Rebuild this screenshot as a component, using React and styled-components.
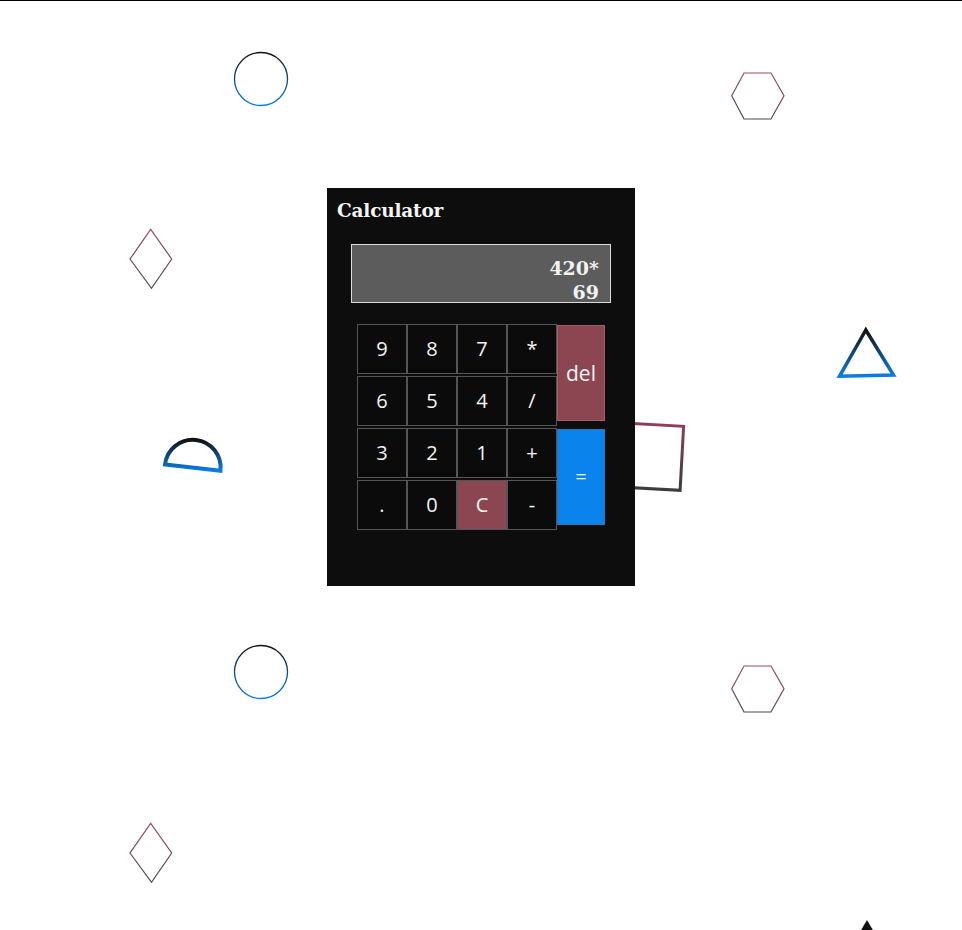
import React from 'react';
import styled, { createGlobalStyle } from 'styled-components';

const GlobalStyle = createGlobalStyle`
  html, body {
    margin: 0;
    padding: 0;
    background: #fff;
  }
`;

const Page = styled.div`
  position: relative;
  height: 929px;
  overflow: hidden;
  border-top: 1px solid #000;
  display: flex;
  justify-content: center;
  align-items: flex-start;
`;

const Shapes = styled.svg`
  position: absolute;
  left: 0;
  top: -1px;
  width: 962px;
  height: 930px;
  z-index: 0;
`;

const Card = styled.div`
  position: relative;
  z-index: 1;
  box-sizing: border-box;
  width: 308px;
  height: 398px;
  margin-top: 187px;
  padding: 10px 0 0 0;
  background: #0d0d0d;
  display: flex;
  flex-direction: column;
`;

const Title = styled.h1`
  margin: 0 0 0 10px;
  font-family: "DejaVu Serif", serif;
  font-weight: bold;
  font-size: 18.5px;
  line-height: 26px;
  letter-spacing: -0.2px;
  color: #f4f4f4;
`;

const Display = styled.div`
  box-sizing: border-box;
  width: 260px;
  height: 59px;
  margin: 20px 0 0 24px;
  padding: 0 11px 0 0;
  background: #5c5c5c;
  border: 1px solid #dcdcdc;
  display: flex;
  flex-direction: column;
  justify-content: flex-end;
  align-items: flex-end;
  font-family: "DejaVu Serif", serif;
  font-weight: bold;
  font-size: 19px;
  line-height: 24px;
  color: #f2f2f2;
`;

const DisplayLine = styled.div`
  position: relative;
  top: 2px;
`;

const Keypad = styled.div`
  display: flex;
  margin: 21px 0 0 30px;
`;

const Grid = styled.div`
  display: grid;
  grid-template-columns: repeat(4, 50px);
  grid-auto-rows: 50px;
  row-gap: 2px;
`;

const Side = styled.div`
  display: flex;
  flex-direction: column;
  gap: 8px;
  padding-top: 1px;
`;

const Key = styled.button`
  box-sizing: border-box;
  margin: 0;
  padding: 0;
  width: ${p => p.$w || 50}px;
  height: ${p => p.$h || 50}px;
  background: ${p => p.$bg || '#0b0b0b'};
  border: 1px solid ${p => p.$border || '#555'};
  color: #f4f4f4;
  font-family: "Open Sans", "Noto Sans", sans-serif;
  font-size: ${p => p.$size || 20}px;
  line-height: 1;
  display: flex;
  align-items: center;
  justify-content: center;
  cursor: pointer;
`;

const keys = ['9', '8', '7', '*', '6', '5', '4', '/', '3', '2', '1', '+', '.', '0', 'C', '-'];

const Grad = ({ id, from, to }) => (
  <linearGradient id={id} x1="0" y1="0" x2="0" y2="1">
    <stop offset="0" stopColor={from} />
    <stop offset="1" stopColor={to} />
  </linearGradient>
);

const hex = (dy) =>
  `731.7,${95.7 + dy} 744,${73 + dy} 771,${73 + dy} 784,${95.7 + dy} 771,${119 + dy} 744,${119 + dy}`;
const diamond = (dy) =>
  `150.7,${229.3 + dy} 171.7,${259 + dy} 151.5,${288.3 + dy} 130,${259 + dy}`;

const Background = () => (
  <Shapes viewBox="0 0 962 930">
    <defs>
      <Grad id="blue" from="#111" to="#0a7ee6" />
      <Grad id="pink" from="#9a4c6c" to="#4a4a4a" />
      <Grad id="pinkSq" from="#8c3f5e" to="#3c3c3c" />
    </defs>
    <circle cx="261" cy="79" r="26.5" fill="none" stroke="url(#blue)" strokeWidth="1.3" />
    <circle cx="261" cy="672" r="26.5" fill="none" stroke="url(#blue)" strokeWidth="1.3" />
    <polygon points={hex(0)} fill="none" stroke="url(#pink)" strokeWidth="1.2" />
    <polygon points={hex(593)} fill="none" stroke="url(#pink)" strokeWidth="1.2" />
    <polygon points={diamond(0)} fill="none" stroke="url(#pink)" strokeWidth="1.2" />
    <polygon points={diamond(594)} fill="none" stroke="url(#pink)" strokeWidth="1.2" />
    <path d="M165,464.5 A27.5 27.5 0 0 1 220.5,470.8 Z" fill="none" stroke="url(#blue)" strokeWidth="4" />
    <polygon points="865.8,330 839.5,376.3 893.5,375" fill="none" stroke="url(#blue)" strokeWidth="3.5" />
    <polygon points="619.6,422.8 683.6,426.3 680.1,490.3 616.1,486.8" fill="none" stroke="url(#pinkSq)" strokeWidth="3" />
    <polygon points="867,920 857,937 877,937" fill="#111" />
  </Shapes>
);

export default function App() {
  return (
    <>
      <GlobalStyle />
      <Page>
        <Background />
        <Card>
          <Title>Calculator</Title>
          <Display>
            <DisplayLine>420*</DisplayLine>
            <DisplayLine>69</DisplayLine>
          </Display>
          <Keypad>
            <Grid>
              {keys.map(k => (
                <Key key={k} $bg={k === 'C' ? '#8b4652' : undefined}>{k}</Key>
              ))}
            </Grid>
            <Side>
              <Key $w={48} $h={96} $bg="#8b4652" $border="#a06068" $size={21}>del</Key>
              <Key $w={48} $h={96} $bg="#0a84ec" $border="#2a74b8" $size={20}>=</Key>
            </Side>
          </Keypad>
        </Card>
      </Page>
    </>
  );
}
